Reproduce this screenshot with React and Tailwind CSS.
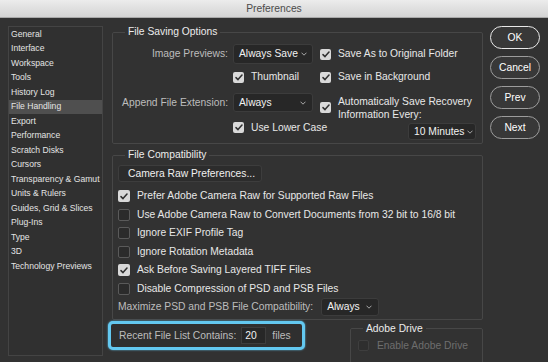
import React from "react";

const FONT = "font-['Liberation_Sans',Arial,sans-serif]";

function Check({ checked = false, size = 11, disabled = false }) {
  const sz = size === 12 ? "w-[12px] h-[12px]" : "w-[11px] h-[11px]";
  if (checked) {
    return (
      <span className={`${sz} shrink-0 rounded-[2px] bg-[#d9d9d9] flex items-center justify-center`}>
        <svg width="8" height="7" viewBox="0 0 8 7" fill="none">
          <path d="M1 3.6 L3 5.6 L7 1" stroke="#2e2e2e" strokeWidth="1.5" strokeLinecap="round" strokeLinejoin="round" />
        </svg>
      </span>
    );
  }
  return (
    <span
      className={`${sz} shrink-0 rounded-[2px] border ${
        disabled ? "border-[#3e3e3e] bg-[#2e2e2e]" : "border-[#5a5a5a] bg-[#2b2b2b]"
      }`}
    />
  );
}

function Chevron() {
  return (
    <svg width="6" height="4" viewBox="0 0 6 4" fill="none" className="shrink-0">
      <path d="M0.5 0.7 L3 3.2 L5.5 0.7" stroke="#a8a8a8" strokeWidth="1" />
    </svg>
  );
}

function Select({ label, w, h, pl = "pl-[6px]", pr = "pr-[6px]" }) {
  return (
    <div
      className={`${w} ${h} ${pl} ${pr} shrink-0 flex items-center justify-between gap-[3px] whitespace-nowrap rounded-[3px] border border-[#3c3c3c] bg-[#272727] text-[#f2f2f2]`}
    >
      <span className="whitespace-nowrap">{label}</span>
      <Chevron />
    </div>
  );
}

const sidebarItems = [
  "General",
  "Interface",
  "Workspace",
  "Tools",
  "History Log",
  "File Handling",
  "Export",
  "Performance",
  "Scratch Disks",
  "Cursors",
  "Transparency & Gamut",
  "Units & Rulers",
  "Guides, Grid & Slices",
  "Plug-Ins",
  "Type",
  "3D",
  "Technology Previews",
];

function Group({ title, className, children, legendMl = "ml-[12px]" }) {
  return (
    <fieldset className={`border border-[#474747] rounded-[2px] ${className}`}>
      <legend className={`${legendMl} px-[3px] leading-[14px] text-[#ececec]`}>{title}</legend>
      {children}
    </fieldset>
  );
}

function G2Row({ checked, children }) {
  return (
    <div className="h-[18.5px] flex items-center pl-[5px]">
      <Check checked={checked} size={12} />
      <span className="ml-[7px] text-[#e8e8e8] whitespace-nowrap">{children}</span>
    </div>
  );
}

function Btn({ children, primary }) {
  return (
    <div
      className={`h-[23px] w-[50px] rounded-full flex items-center justify-center text-white bg-[#383838] ${
        primary ? "border-[1.5px] border-[#e8e8e8]" : "border border-[#9c9c9c]"
      }`}
    >
      {children}
    </div>
  );
}

export default function App() {
  return (
    <div className={`${FONT} w-[548px] h-[362px] overflow-hidden bg-[#323232] text-[10.3px] flex flex-col`}>
      {/* Title bar */}
      <div className="h-[18px] shrink-0 bg-gradient-to-b from-[#ececec] to-[#d4d4d4] border-b border-[#a9a9a9] flex items-center justify-center text-[#4b4b4b]">
        Preferences
      </div>

      <div className="flex flex-1 min-h-0">
        {/* Sidebar */}
        <div className="ml-[8px] mt-[8px] w-[95px] h-[330px] shrink-0 border border-[#444] bg-[#303030] flex flex-col">
          {sidebarItems.map((it) => (
            <div
              key={it}
              className={`h-[14.5px] shrink-0 pl-[2px] flex items-center whitespace-nowrap text-[8.6px] text-[#e4e4e4] ${
                it === "File Handling" ? "bg-[#4f4f4f]" : ""
              }`}
            >
              {it}
            </div>
          ))}
        </div>

        {/* Main column */}
        <div className="ml-[5px] w-[375px] shrink-0 flex flex-col">
          <Group title="File Saving Options" className="mt-[7px] ml-[4px] w-[371px] pb-[3px]">
            <div className="flex">
              {/* left part */}
              <div className="w-[200px] shrink-0 flex flex-col">
                <div className="mt-[5px] h-[20px] flex items-center">
                  <span className="w-[115px] text-right text-[#bdbdbd] whitespace-nowrap">Image Previews:</span>
                  <div className="ml-[5px]">
                    <Select label="Always Save" w="w-[80px]" h="h-[20px]" pl="pl-[5px]" pr="pr-[5px]" />
                  </div>
                </div>
                <div className="mt-[6px] h-[14px] flex items-center pl-[120px]">
                  <Check checked />
                  <span className="ml-[7px] text-[#e8e8e8]">Thumbnail</span>
                </div>
                <div className="mt-[9px] h-[19px] flex items-center">
                  <span className="w-[115px] text-right text-[#bdbdbd] whitespace-nowrap">Append File Extension:</span>
                  <div className="ml-[5px]">
                    <Select label="Always" w="w-[80px]" h="h-[19px]" pl="pl-[5px]" />
                  </div>
                </div>
                <div className="mt-[8.5px] h-[14px] flex items-center pl-[120px]">
                  <Check checked />
                  <span className="ml-[7px] text-[#e8e8e8] whitespace-nowrap">Use Lower Case</span>
                </div>
              </div>
              {/* right part */}
              <div className="ml-[7px] flex-1 flex flex-col">
                <div className="mt-[5px] h-[20px] flex items-center">
                  <Check checked />
                  <span className="ml-[7px] text-[#e8e8e8] whitespace-nowrap">Save As to Original Folder</span>
                </div>
                <div className="mt-[6px] h-[14px] flex items-center">
                  <Check checked />
                  <span className="ml-[7px] text-[#e8e8e8] whitespace-nowrap">Save in Background</span>
                </div>
                <div className="mt-[10.5px] flex items-center">
                  <Check checked />
                  <span className="ml-[7px] text-[#e8e8e8] leading-[13px] whitespace-nowrap">
                    Automatically Save Recovery
                    <br />
                    Information Every:
                  </span>
                </div>
                <div className="mt-[2.5px] flex justify-end pr-[6px]">
                  <Select label="10 Minutes" w="w-[68px]" h="h-[17px]" pl="pl-[5px]" pr="pr-[4px]" />
                </div>
              </div>
            </div>
          </Group>

          <Group title="File Compatibility" className="mt-[4px] ml-[4px] w-[371px] pb-[2.5px]">
            <div className="flex flex-col">
              <div className="mt-[3px] ml-[5px] w-[144px] h-[17px] rounded-[3px] border border-[#3d3d3d] bg-[#2c2c2c] pl-[9px] flex items-center text-[#f0f0f0] whitespace-nowrap">
                Camera Raw Preferences...
              </div>
              <div className="mt-[4.75px] flex flex-col">
                <G2Row checked>Prefer Adobe Camera Raw for Supported Raw Files</G2Row>
                <G2Row>Use Adobe Camera Raw to Convert Documents from 32 bit to 16/8 bit</G2Row>
                <G2Row>Ignore EXIF Profile Tag</G2Row>
                <G2Row>Ignore Rotation Metadata</G2Row>
                <G2Row checked>Ask Before Saving Layered TIFF Files</G2Row>
                <G2Row>Disable Compression of PSD and PSB Files</G2Row>
                <div className="h-[18.5px] flex items-center pl-[5px]">
                  <span className="text-[#bdbdbd] whitespace-nowrap">Maximize PSD and PSB File Compatibility:</span>
                  <div className="ml-[8px]">
                    <Select label="Always" w="w-[58px]" h="h-[18px]" pl="pl-[5px]" />
                  </div>
                </div>
              </div>
            </div>
          </Group>

          <div className="mt-[1px] flex items-start">
            <div className="w-[197px] h-[29px] shrink-0 rounded-[5px] border-[3px] border-[#63c8f0] shadow-[0_0_2px_#63c8f0] bg-[#2f2f2f] flex items-center pl-[8px]">
              <span className="text-[#bdbdbd] whitespace-nowrap">Recent File List Contains:</span>
              <div className="ml-[5px] w-[25px] h-[17px] border border-[#3d3d3d] bg-[#272727] flex items-center pl-[3px] text-[#f2f2f2]">
                20
              </div>
              <span className="ml-[6px] text-[#bdbdbd]">files</span>
            </div>
            <Group title="Adobe Drive" className="mt-[1px] ml-[45px] w-[133px] h-[60px]">
              <div className="mt-[2px] ml-[7px] flex items-center">
                <Check size={11} disabled />
                <span className="ml-[8px] text-[#6e6e6e] whitespace-nowrap">Enable Adobe Drive</span>
              </div>
            </Group>
          </div>
        </div>

        {/* Buttons */}
        <div className="ml-[7px] mt-[8px] flex flex-col gap-[7px]">
          <Btn primary>OK</Btn>
          <Btn>Cancel</Btn>
          <Btn>Prev</Btn>
          <Btn>Next</Btn>
        </div>
      </div>
    </div>
  );
}
